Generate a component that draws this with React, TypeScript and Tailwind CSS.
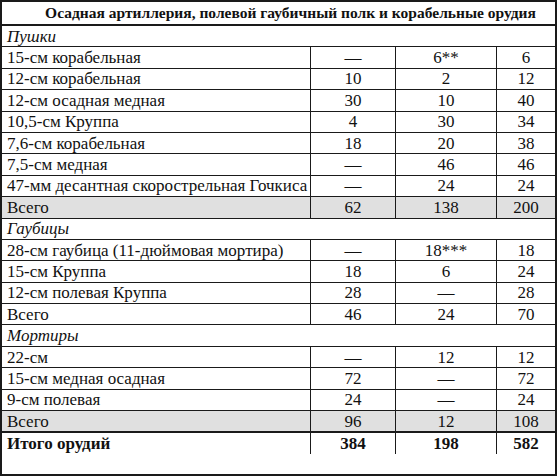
const rows: (
  | { kind: "section"; label: string }
  | { kind: "data"; label: string; a: string; b: string; c: string; shaded?: boolean; bold?: boolean }
)[] = [
  { kind: "section", label: "Пушки" },
  { kind: "data", label: "15-см корабельная", a: "—", b: "6**", c: "6" },
  { kind: "data", label: "12-см корабельная", a: "10", b: "2", c: "12" },
  { kind: "data", label: "12-см осадная медная", a: "30", b: "10", c: "40" },
  { kind: "data", label: "10,5-см Круппа", a: "4", b: "30", c: "34" },
  { kind: "data", label: "7,6-см корабельная", a: "18", b: "20", c: "38" },
  { kind: "data", label: "7,5-см медная", a: "—", b: "46", c: "46" },
  { kind: "data", label: "47-мм десантная скорострельная Гочкиса", a: "—", b: "24", c: "24" },
  { kind: "data", label: "Всего", a: "62", b: "138", c: "200", shaded: true },
  { kind: "section", label: "Гаубицы" },
  { kind: "data", label: "28-см гаубица (11-дюймовая мортира)", a: "—", b: "18***", c: "18" },
  { kind: "data", label: "15-см Круппа", a: "18", b: "6", c: "24" },
  { kind: "data", label: "12-см полевая Круппа", a: "28", b: "—", c: "28" },
  { kind: "data", label: "Всего", a: "46", b: "24", c: "70" },
  { kind: "section", label: "Мортиры" },
  { kind: "data", label: "22-см", a: "—", b: "12", c: "12" },
  { kind: "data", label: "15-см медная осадная", a: "72", b: "—", c: "72" },
  { kind: "data", label: "9-см полевая", a: "24", b: "—", c: "24" },
  { kind: "data", label: "Всего", a: "96", b: "12", c: "108", shaded: true },
  { kind: "data", label: "Итого орудий", a: "384", b: "198", c: "582", bold: true },
];

export default function App() {
  return (
    <div className="w-[557px] h-[476px] bg-white text-[#111] [font-family:'Liberation_Serif','Times_New_Roman',serif] text-[17px] leading-none">
      <div className="w-[557px] h-[476px] border-2 border-[#1a1a1a] flex flex-col">
        <div className="h-[24px] shrink-0 flex items-center justify-center pl-[24px] font-bold text-[15.5px] border-b-2 border-[#1a1a1a]">
          Осадная артиллерия, полевой гаубичный полк и корабельные орудия
        </div>
        {rows.map((r, i) => {
          const last = i === rows.length - 1;
          const rowBorder = last ? "" : "border-b-[1.5px] border-[#1a1a1a]";
          if (r.kind === "section") {
            return (
              <div key={i} className={`h-[21.4px] shrink-0 flex items-center pl-[5px] italic ${rowBorder}`}>
                {r.label}
              </div>
            );
          }
          return (
            <div
              key={i}
              className={`h-[21.4px] shrink-0 flex ${rowBorder} ${r.shaded ? "bg-[#e0e0e0]" : ""} ${r.bold ? "font-bold border-t-[1px] border-t-[#1a1a1a]" : ""}`}
            >
              <div className="w-[309px] shrink-0 flex items-center pl-[5px] border-r-[1.5px] border-[#1a1a1a]">{r.label}</div>
              <div className="w-[85px] shrink-0 flex items-center justify-center border-r-[1.5px] border-[#1a1a1a]">{r.a}</div>
              <div className="w-[101px] shrink-0 flex items-center justify-center border-r-[1.5px] border-[#1a1a1a]">{r.b}</div>
              <div className="flex-1 flex items-center justify-center">{r.c}</div>
            </div>
          );
        })}
      </div>
    </div>
  );
}
